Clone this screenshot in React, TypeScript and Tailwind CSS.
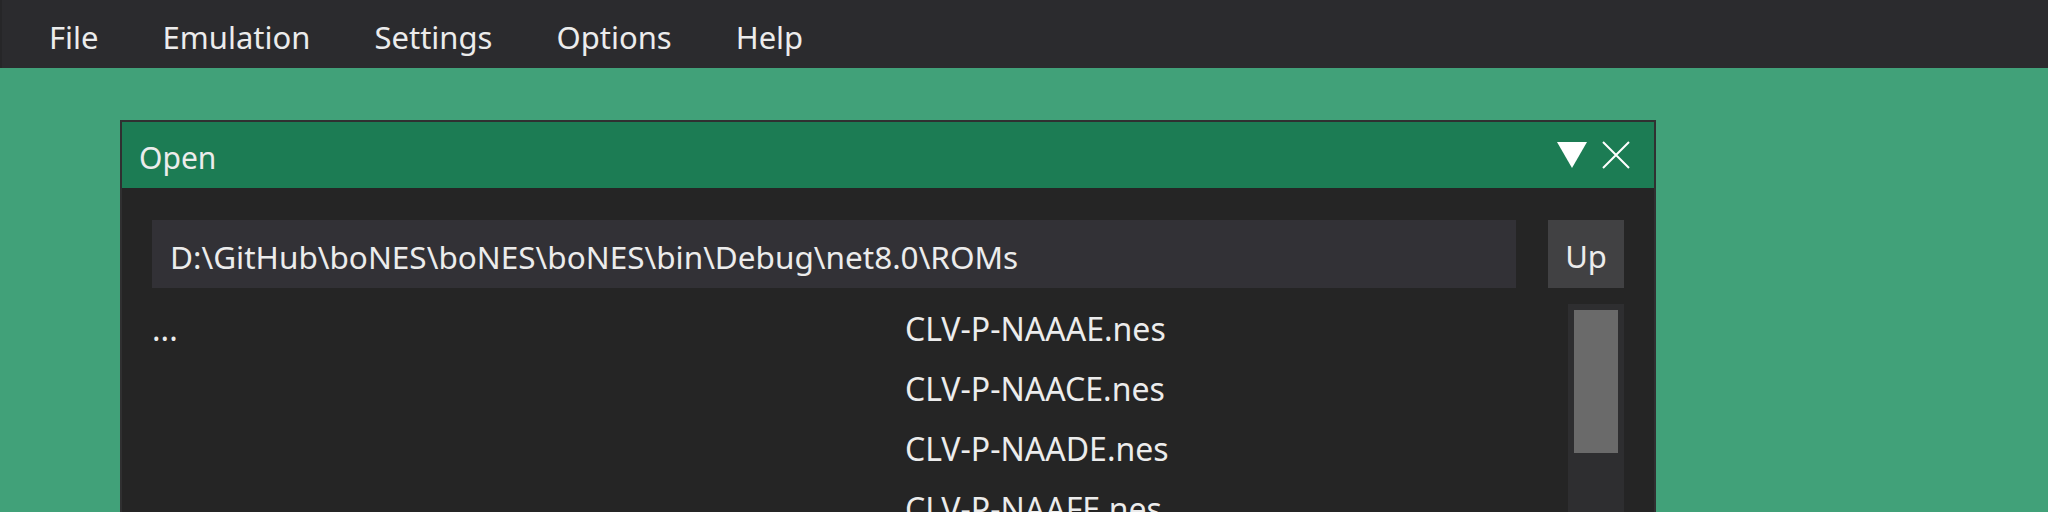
import React from 'react';

const menuItems = ['File', 'Emulation', 'Settings', 'Options', 'Help'];

const files = ['CLV-P-NAAAE.nes', 'CLV-P-NAACE.nes', 'CLV-P-NAADE.nes', 'CLV-P-NAAFE.nes', 'CLV-P-NAAGE.nes'];

const App = () => {
  return (
    <div className="w-[2048px] h-[512px] overflow-hidden bg-[#41a179] flex flex-col font-['Noto_Sans',sans-serif] text-[#ececec]">
      {/* Menu bar */}
      <div className="h-[68px] shrink-0 bg-[#2b2b2e] border-l-2 border-[#262628] flex items-center pl-[15px] pt-[7px]">
        {menuItems.map((item) => (
          <div key={item} className="px-[32px] text-[31px] leading-none">
            {item}
          </div>
        ))}
      </div>

      {/* Desktop */}
      <div className="pt-[52px] pl-[120px]">
        <div className="w-[1536px] h-[500px] border-2 border-[#303031] bg-[#252525] flex flex-col">
          {/* Title bar */}
          <div className="h-[66px] shrink-0 bg-[#1c7c54] flex items-center justify-between pl-[17px] pr-[24px]">
            <span className="text-[30px] leading-none pt-[5px]">Open</span>
            <div className="flex items-center gap-[15px]">
              <svg width="30" height="26" viewBox="0 0 30 26">
                <polygon points="0,0 30,0 15,26" fill="#ffffff" />
              </svg>
              <svg width="28" height="28" viewBox="0 0 28 28">
                <path d="M1 1 L27 27 M27 1 L1 27" stroke="#ffffff" strokeWidth="2" />
              </svg>
            </div>
          </div>

          {/* Content */}
          <div className="px-[30px] pt-[32px]">
            <div className="flex gap-[32px] h-[68px]">
              <div className="flex-1 bg-[#323136] flex items-center pl-[18px] pt-[5px] text-[31.5px] leading-none">
                D:\GitHub\boNES\boNES\boNES\bin\Debug\net8.0\ROMs
              </div>
              <button className="w-[76px] bg-[#414143] flex items-center justify-center pt-[5px] text-[31px] leading-none text-[#ececec]">
                Up
              </button>
            </div>

            <div className="flex items-start mt-[11px]">
              <div className="flex-1 grid grid-cols-[753px_1fr] text-[32px]">
                {files.map((f, i) => (
                  <React.Fragment key={f}>
                    <div className="h-[60px] flex items-center">{i === 0 ? '...' : ''}</div>
                    <div className="h-[60px] flex items-center">{f}</div>
                  </React.Fragment>
                ))}
              </div>
              <div className="w-[56px] h-[400px] mt-[5px] bg-[#2e2e30] p-[6px]">
                <div className="h-[143px] bg-[#6a6a6a]" />
              </div>
            </div>
          </div>
        </div>
      </div>
    </div>
  );
};

export default App;
